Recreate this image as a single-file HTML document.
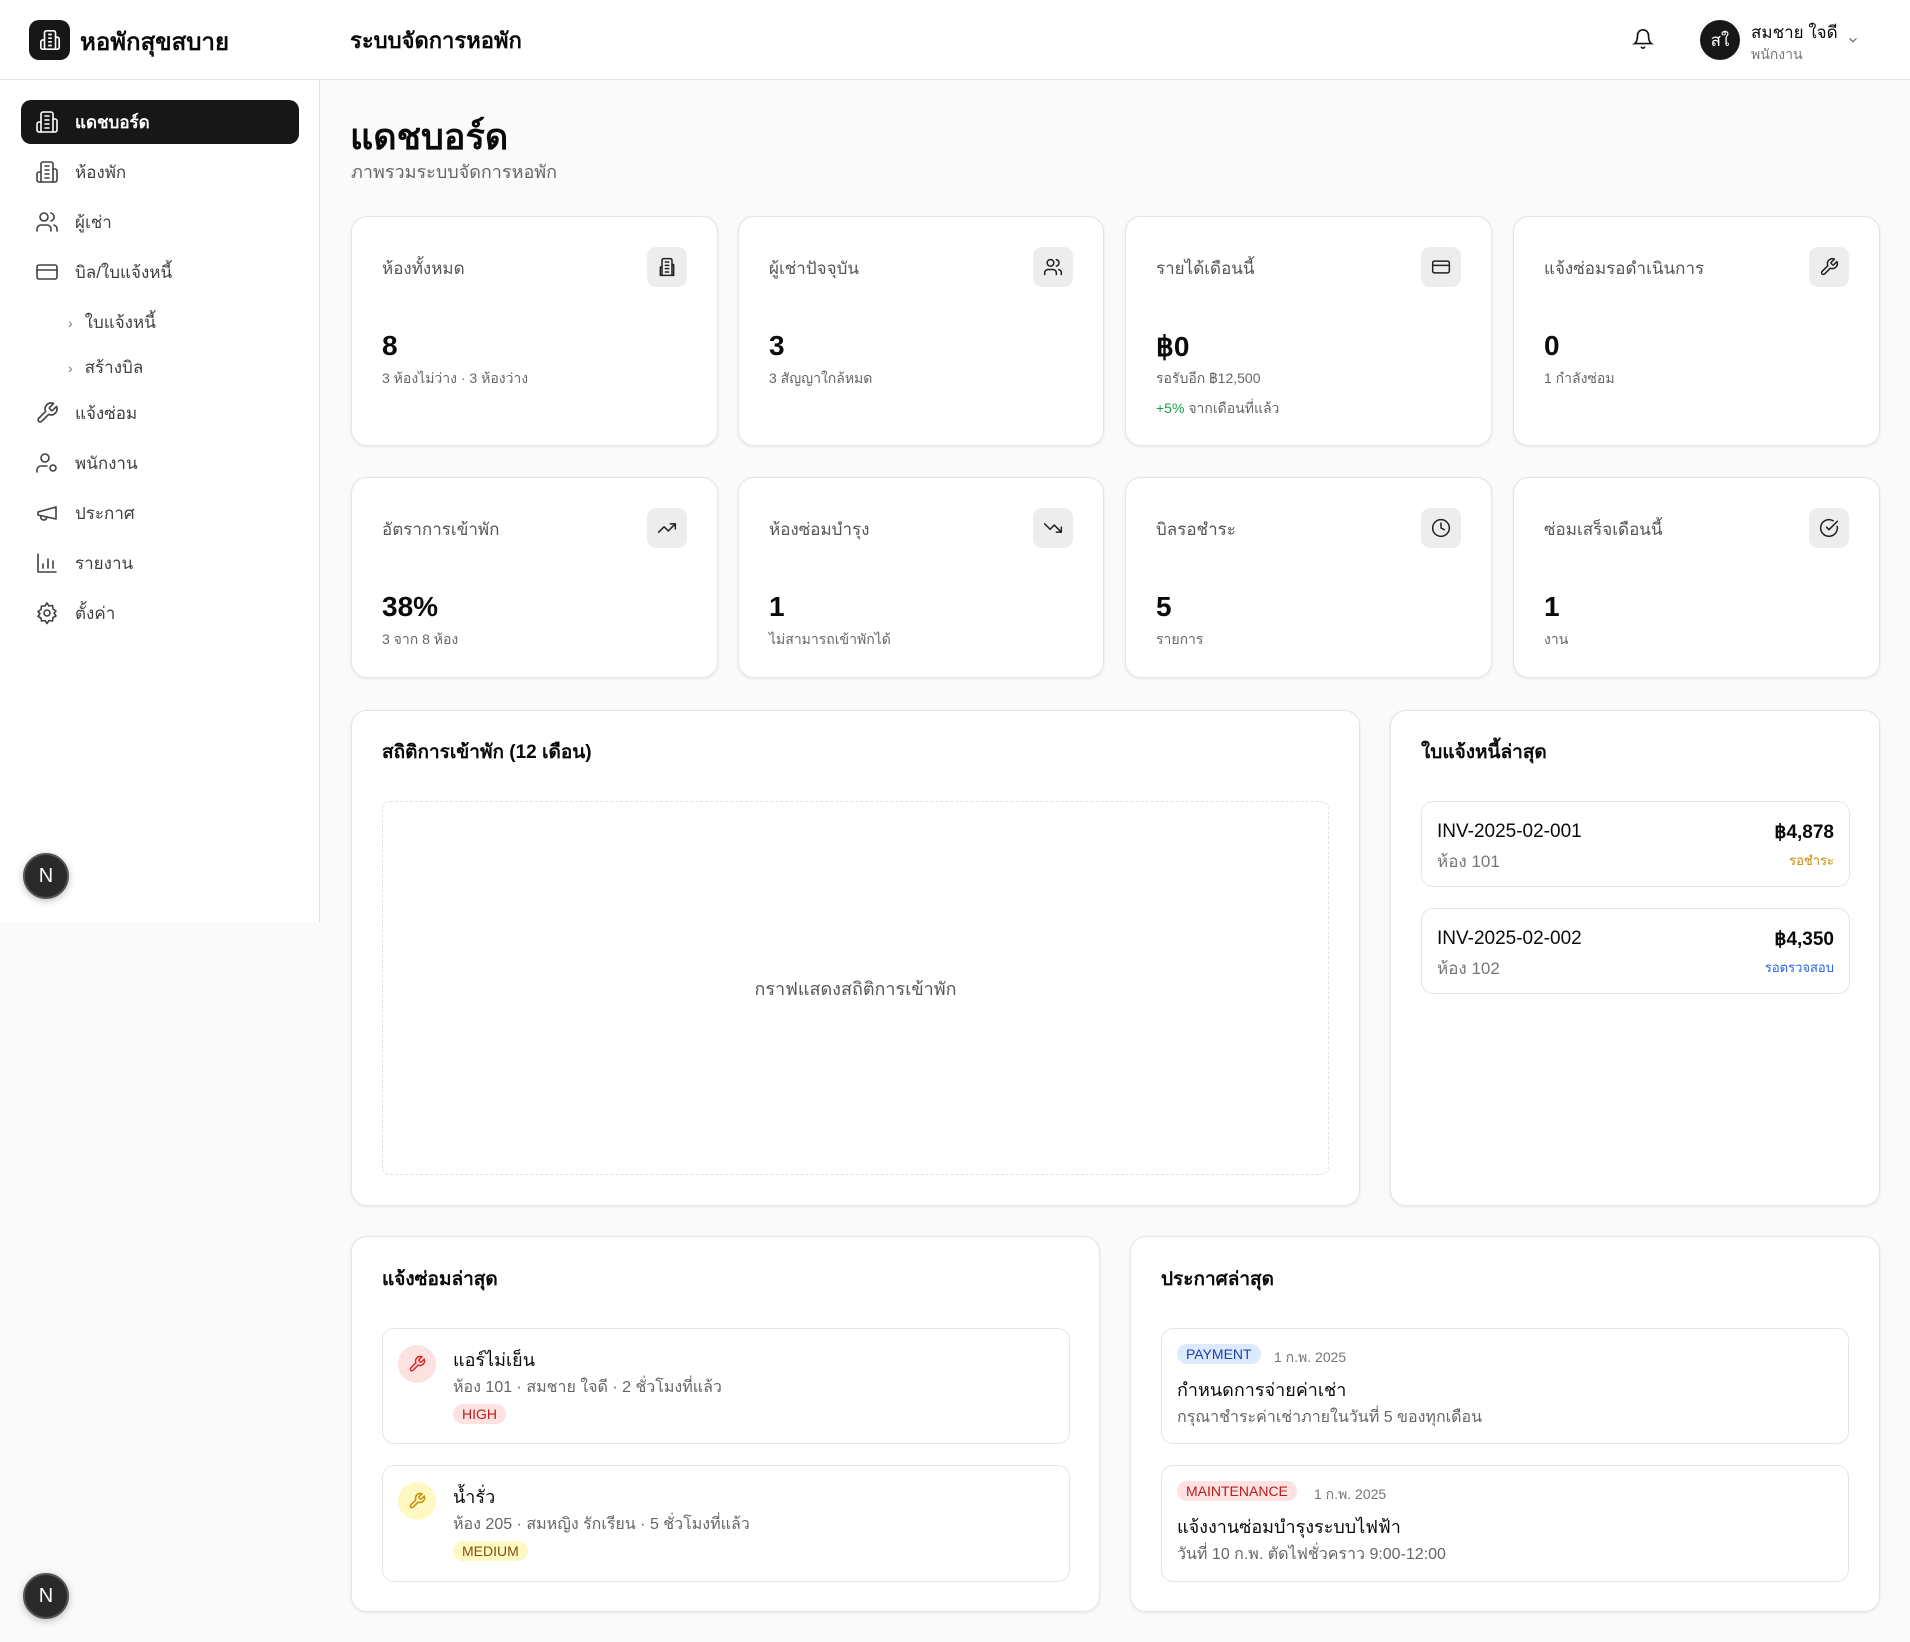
<!DOCTYPE html>
<html><head><meta charset="utf-8"><style>
*{box-sizing:border-box;margin:0;padding:0}
body{width:1910px;height:1642px;background:#fafafa;font-family:"Liberation Sans",sans-serif;color:#0a0a0a;position:relative;overflow:hidden}
.a{position:absolute}
.side{left:0;top:0;width:320px;height:922px;background:#fff;border-right:1px solid #e5e5e5}
.hdr{left:0;top:0;width:1910px;height:80px;background:#fff;border-bottom:1px solid #e5e5e5}
.nav{left:21px;width:278px;height:44px;border-radius:10px;display:flex;align-items:center;padding-left:14px;font-size:17px;color:#404040}
.nav svg{width:24px;height:24px;margin-right:16px;fill:none;stroke:currentColor;stroke-width:1.6;stroke-linecap:round;stroke-linejoin:round}
.nav.on{background:#171717;color:#fff;font-weight:bold}
.sub{left:68px;font-size:17px;color:#404040}
.sub b{font-weight:normal;color:#777;margin-right:12px;font-size:14px}
.card{background:#fff;border:1px solid #e5e5e5;border-radius:16px;box-shadow:0 1px 3px rgba(0,0,0,.08)}
.lbl{left:30px;top:38px;font-size:17px;color:#555}
.ib{right:30px;top:30px;width:40px;height:40px;border-radius:9px;background:#ededed;display:flex;align-items:center;justify-content:center}
.ib svg{width:20px;height:20px;fill:none;stroke:#222;stroke-width:1.8;stroke-linecap:round;stroke-linejoin:round}
.val{left:30px;top:113px;font-size:28px;font-weight:bold}
.sm{left:30px;top:151px;font-size:14px;color:#666}
.ttl{font-size:19px;font-weight:bold}
.it{border:1px solid #e5e5e5;border-radius:12px;background:#fff}
.badge{display:inline-block;padding:2px 9px;border-radius:10px;font-size:14px}
.nb{width:46px;height:46px;border-radius:50%;background:#2a2a2a;border:2px solid #555;color:#fff;display:flex;align-items:center;justify-content:center;font-size:20px;box-shadow:0 2px 8px rgba(0,0,0,.25)}
</style></head><body>
<div class="a side"></div>
<div class="a hdr"></div>
<div class="a" style="left:29px;top:20px;width:41px;height:40px;border-radius:10px;background:#171717;display:flex;align-items:center;justify-content:center"><svg width="22" height="22" viewBox="0 0 24 24" fill="none" stroke="#fff" stroke-width="1.8"><path d="M6 22V4a2 2 0 0 1 2-2h8a2 2 0 0 1 2 2v18Z"/><path d="M6 12H4a2 2 0 0 0-2 2v6a2 2 0 0 0 2 2h2M18 9h2a2 2 0 0 1 2 2v9a2 2 0 0 1-2 2h-2M10 6h4M10 10h4M10 14h4M10 18h4"/></svg></div>
<div class="a" style="left:80px;top:22px;font-size:24px;font-weight:bold">หอพักสุขสบาย</div>
<div class="a" style="left:350px;top:23px;font-size:22px;font-weight:bold">ระบบจัดการหอพัก</div>
<svg class="a" style="left:1632px;top:28px" width="22" height="22" viewBox="0 0 24 24" fill="none" stroke="#111" stroke-width="1.8" stroke-linecap="round"><path d="M6 8a6 6 0 0 1 12 0c0 7 3 9 3 9H3s3-2 3-9M10.3 21a1.9 1.9 0 0 0 3.4 0"/></svg>
<div class="a" style="left:1700px;top:20px;width:40px;height:40px;border-radius:50%;background:#171717;color:#fff;font-size:17px;display:flex;align-items:center;justify-content:center">สใ</div>
<div class="a" style="left:1751px;top:19px;font-size:17px">สมชาย ใจดี</div>
<div class="a" style="left:1751px;top:44px;font-size:14px;color:#777">พนักงาน</div>
<svg class="a" style="left:1846px;top:33px" width="14" height="14" viewBox="0 0 24 24" fill="none" stroke="#666" stroke-width="2"><path d="m6 9 6 6 6-6"/></svg>

<div class="a nav on" style="top:100px"><svg viewBox="0 0 24 24"><path d="M6 22V4a2 2 0 0 1 2-2h8a2 2 0 0 1 2 2v18Z"/><path d="M6 12H4a2 2 0 0 0-2 2v6a2 2 0 0 0 2 2h2M18 9h2a2 2 0 0 1 2 2v9a2 2 0 0 1-2 2h-2M10 6h4M10 10h4M10 14h4M10 18h4"/></svg>แดชบอร์ด</div>
<div class="a nav" style="top:150px"><svg viewBox="0 0 24 24"><path d="M6 22V4a2 2 0 0 1 2-2h8a2 2 0 0 1 2 2v18Z"/><path d="M6 12H4a2 2 0 0 0-2 2v6a2 2 0 0 0 2 2h2M18 9h2a2 2 0 0 1 2 2v9a2 2 0 0 1-2 2h-2M10 6h4M10 10h4M10 14h4M10 18h4"/></svg>ห้องพัก</div>
<div class="a nav" style="top:200px"><svg viewBox="0 0 24 24"><path d="M16 21v-2a4 4 0 0 0-4-4H6a4 4 0 0 0-4 4v2"/><circle cx="9" cy="7" r="4"/><path d="M22 21v-2a4 4 0 0 0-3-3.9M16 3.1a4 4 0 0 1 0 7.8"/></svg>ผู้เช่า</div>
<div class="a nav" style="top:250px"><svg viewBox="0 0 24 24"><rect x="2" y="5" width="20" height="14" rx="2"/><path d="M2 10h20"/></svg>บิล/ใบแจ้งหนี้</div>
<div class="a sub" style="top:309px"><b>›</b>ใบแจ้งหนี้</div>
<div class="a sub" style="top:354px"><b>›</b>สร้างบิล</div>
<div class="a nav" style="top:391px"><svg viewBox="0 0 24 24"><path d="M14.7 6.3a1 1 0 0 0 0 1.4l1.6 1.6a1 1 0 0 0 1.4 0l3.8-3.8a6 6 0 0 1-7.9 7.9l-6.9 6.9a2.1 2.1 0 0 1-3-3l6.9-6.9a6 6 0 0 1 7.9-7.9z"/></svg>แจ้งซ่อม</div>
<div class="a nav" style="top:441px"><svg viewBox="0 0 24 24"><circle cx="10" cy="7" r="4"/><path d="M2 21v-2a4 4 0 0 1 4-4h6"/><circle cx="18" cy="17" r="3"/></svg>พนักงาน</div>
<div class="a nav" style="top:491px"><svg viewBox="0 0 24 24"><path d="m3 11 18-5v12L3 14v-3zM11.6 16.8a3 3 0 1 1-5.8-1.6"/></svg>ประกาศ</div>
<div class="a nav" style="top:541px"><svg viewBox="0 0 24 24"><path d="M3 3v18h18M8 17v-4M13 17V8M18 17v-7"/></svg>รายงาน</div>
<div class="a nav" style="top:591px"><svg viewBox="0 0 24 24"><circle cx="12" cy="12" r="3"/><path d="M12 2l2 3 3.5-.5.5 3.5 3 2-2 2 2 3-3 1.5-.5 3.5-3.5-.5-2 3-2-3-3.5.5L6 17l-3-1.5 2-3-2-2 3-2 .5-3.5L10 5z"/></svg>ตั้งค่า</div>
<div class="a nb" style="left:23px;top:853px">N</div>
<div class="a nb" style="left:23px;top:1573px">N</div>

<div class="a" style="left:350px;top:108px;font-size:36px;font-weight:bold">แดชบอร์ด</div>
<div class="a" style="left:351px;top:157px;font-size:18px;color:#666">ภาพรวมระบบจัดการหอพัก</div>

<div class="a card" style="left:351px;top:216px;width:367px;height:230px"><div class="a lbl">ห้องทั้งหมด</div><div class="a ib"><svg viewBox="0 0 24 24"><path d="M6 22V4a2 2 0 0 1 2-2h8a2 2 0 0 1 2 2v18Z"/><path d="M6 12H4v10h2M18 9h2v13h-2M10 6h4M10 10h4M10 14h4M10 18h4"/></svg></div><div class="a val">8</div><div class="a sm">3 ห้องไม่ว่าง · 3 ห้องว่าง</div></div>
<div class="a card" style="left:738px;top:216px;width:366px;height:230px"><div class="a lbl">ผู้เช่าปัจจุบัน</div><div class="a ib"><svg viewBox="0 0 24 24"><path d="M16 21v-2a4 4 0 0 0-4-4H6a4 4 0 0 0-4 4v2"/><circle cx="9" cy="7" r="4"/><path d="M22 21v-2a4 4 0 0 0-3-3.9M16 3.1a4 4 0 0 1 0 7.8"/></svg></div><div class="a val">3</div><div class="a sm">3 สัญญาใกล้หมด</div></div>
<div class="a card" style="left:1125px;top:216px;width:367px;height:230px"><div class="a lbl">รายได้เดือนนี้</div><div class="a ib"><svg viewBox="0 0 24 24"><rect x="2" y="5" width="20" height="14" rx="2"/><path d="M2 10h20"/></svg></div><div class="a val">฿0</div><div class="a sm">รอรับอีก ฿12,500</div><div class="a sm" style="top:181px;color:#16a34a">+5% <span style="color:#666">จากเดือนที่แล้ว</span></div></div>
<div class="a card" style="left:1513px;top:216px;width:367px;height:230px"><div class="a lbl">แจ้งซ่อมรอดำเนินการ</div><div class="a ib"><svg viewBox="0 0 24 24"><path d="M14.7 6.3a1 1 0 0 0 0 1.4l1.6 1.6a1 1 0 0 0 1.4 0l3.8-3.8a6 6 0 0 1-7.9 7.9l-6.9 6.9a2.1 2.1 0 0 1-3-3l6.9-6.9a6 6 0 0 1 7.9-7.9z"/></svg></div><div class="a val">0</div><div class="a sm">1 กำลังซ่อม</div></div>

<div class="a card" style="left:351px;top:477px;width:367px;height:201px"><div class="a lbl">อัตราการเข้าพัก</div><div class="a ib"><svg viewBox="0 0 24 24"><path d="m22 7-8.5 8.5-5-5L2 17M16 7h6v6"/></svg></div><div class="a val">38%</div><div class="a sm">3 จาก 8 ห้อง</div></div>
<div class="a card" style="left:738px;top:477px;width:366px;height:201px"><div class="a lbl">ห้องซ่อมบำรุง</div><div class="a ib"><svg viewBox="0 0 24 24"><path d="m22 17-8.5-8.5-5 5L2 7M16 17h6v-6"/></svg></div><div class="a val">1</div><div class="a sm">ไม่สามารถเข้าพักได้</div></div>
<div class="a card" style="left:1125px;top:477px;width:367px;height:201px"><div class="a lbl">บิลรอชำระ</div><div class="a ib"><svg viewBox="0 0 24 24"><circle cx="12" cy="12" r="10"/><path d="M12 6v6l4 2"/></svg></div><div class="a val">5</div><div class="a sm">รายการ</div></div>
<div class="a card" style="left:1513px;top:477px;width:367px;height:201px"><div class="a lbl">ซ่อมเสร็จเดือนนี้</div><div class="a ib"><svg viewBox="0 0 24 24"><path d="M21.8 10A10 10 0 1 1 17 3.3"/><path d="m9 11 3 3L22 4"/></svg></div><div class="a val">1</div><div class="a sm">งาน</div></div>

<div class="a card" style="left:351px;top:710px;width:1009px;height:496px">
<div class="a ttl" style="left:30px;top:26px">สถิติการเข้าพัก (12 เดือน)</div>
<div class="a" style="left:30px;top:90px;width:947px;height:374px;border:1px dashed #e0e0e0;border-radius:8px;display:flex;align-items:center;justify-content:center;font-size:18px;color:#555">กราฟแสดงสถิติการเข้าพัก</div>
</div>
<div class="a card" style="left:1390px;top:710px;width:490px;height:496px">
<div class="a ttl" style="left:30px;top:26px">ใบแจ้งหนี้ล่าสุด</div>
<div class="a it" style="left:30px;top:90px;width:429px;height:86px"><div class="a" style="left:15px;top:19px;font-size:19px">INV-2025-02-001</div><div class="a" style="left:15px;top:46px;font-size:17px;color:#777">ห้อง 101</div><div class="a" style="right:15px;top:19px;font-size:19px;font-weight:bold">฿4,878</div><div class="a" style="right:15px;top:48px;font-size:13px;color:#ca8a04">รอชำระ</div></div>
<div class="a it" style="left:30px;top:197px;width:429px;height:86px"><div class="a" style="left:15px;top:19px;font-size:19px">INV-2025-02-002</div><div class="a" style="left:15px;top:46px;font-size:17px;color:#777">ห้อง 102</div><div class="a" style="right:15px;top:19px;font-size:19px;font-weight:bold">฿4,350</div><div class="a" style="right:15px;top:48px;font-size:13px;color:#2563eb">รอตรวจสอบ</div></div>
</div>

<div class="a card" style="left:351px;top:1236px;width:749px;height:376px">
<div class="a ttl" style="left:30px;top:27px">แจ้งซ่อมล่าสุด</div>
<div class="a it" style="left:30px;top:91px;width:688px;height:116px">
<div class="a" style="left:15px;top:16px;width:38px;height:38px;border-radius:50%;background:#fee2e2;display:flex;align-items:center;justify-content:center"><svg width="18" height="18" viewBox="0 0 24 24" fill="none" stroke="#dc2626" stroke-width="2"><path d="M14.7 6.3a1 1 0 0 0 0 1.4l1.6 1.6a1 1 0 0 0 1.4 0l3.8-3.8a6 6 0 0 1-7.9 7.9l-6.9 6.9a2.1 2.1 0 0 1-3-3l6.9-6.9a6 6 0 0 1 7.9-7.9z"/></svg></div>
<div class="a" style="left:70px;top:16px;font-size:18px">แอร์ไม่เย็น</div>
<div class="a" style="left:70px;top:46px;font-size:16px;color:#666">ห้อง 101 · สมชาย ใจดี · 2 ชั่วโมงที่แล้ว</div>
<div class="a badge" style="left:70px;top:75px;background:#fee2e2;color:#b91c1c">HIGH</div></div>
<div class="a it" style="left:30px;top:228px;width:688px;height:117px">
<div class="a" style="left:15px;top:16px;width:38px;height:38px;border-radius:50%;background:#fef9c3;display:flex;align-items:center;justify-content:center"><svg width="18" height="18" viewBox="0 0 24 24" fill="none" stroke="#ca8a04" stroke-width="2"><path d="M14.7 6.3a1 1 0 0 0 0 1.4l1.6 1.6a1 1 0 0 0 1.4 0l3.8-3.8a6 6 0 0 1-7.9 7.9l-6.9 6.9a2.1 2.1 0 0 1-3-3l6.9-6.9a6 6 0 0 1 7.9-7.9z"/></svg></div>
<div class="a" style="left:70px;top:16px;font-size:18px">น้ำรั่ว</div>
<div class="a" style="left:70px;top:46px;font-size:16px;color:#666">ห้อง 205 · สมหญิง รักเรียน · 5 ชั่วโมงที่แล้ว</div>
<div class="a badge" style="left:70px;top:75px;background:#fef9c3;color:#854d0e">MEDIUM</div></div>
</div>
<div class="a card" style="left:1130px;top:1236px;width:750px;height:376px">
<div class="a ttl" style="left:30px;top:27px">ประกาศล่าสุด</div>
<div class="a it" style="left:30px;top:91px;width:688px;height:116px">
<div class="a badge" style="left:15px;top:15px;background:#dbeafe;color:#1e40af">PAYMENT</div><div class="a" style="left:112px;top:18px;font-size:14px;color:#777">1 ก.พ. 2025</div>
<div class="a" style="left:15px;top:46px;font-size:18px">กำหนดการจ่ายค่าเช่า</div>
<div class="a" style="left:15px;top:76px;font-size:16px;color:#666">กรุณาชำระค่าเช่าภายในวันที่ 5 ของทุกเดือน</div></div>
<div class="a it" style="left:30px;top:228px;width:688px;height:117px">
<div class="a badge" style="left:15px;top:15px;background:#fee2e2;color:#b91c1c">MAINTENANCE</div><div class="a" style="left:152px;top:18px;font-size:14px;color:#777">1 ก.พ. 2025</div>
<div class="a" style="left:15px;top:46px;font-size:18px">แจ้งงานซ่อมบำรุงระบบไฟฟ้า</div>
<div class="a" style="left:15px;top:76px;font-size:16px;color:#666">วันที่ 10 ก.พ. ตัดไฟชั่วคราว 9:00-12:00</div></div>
</div>
</body></html>
